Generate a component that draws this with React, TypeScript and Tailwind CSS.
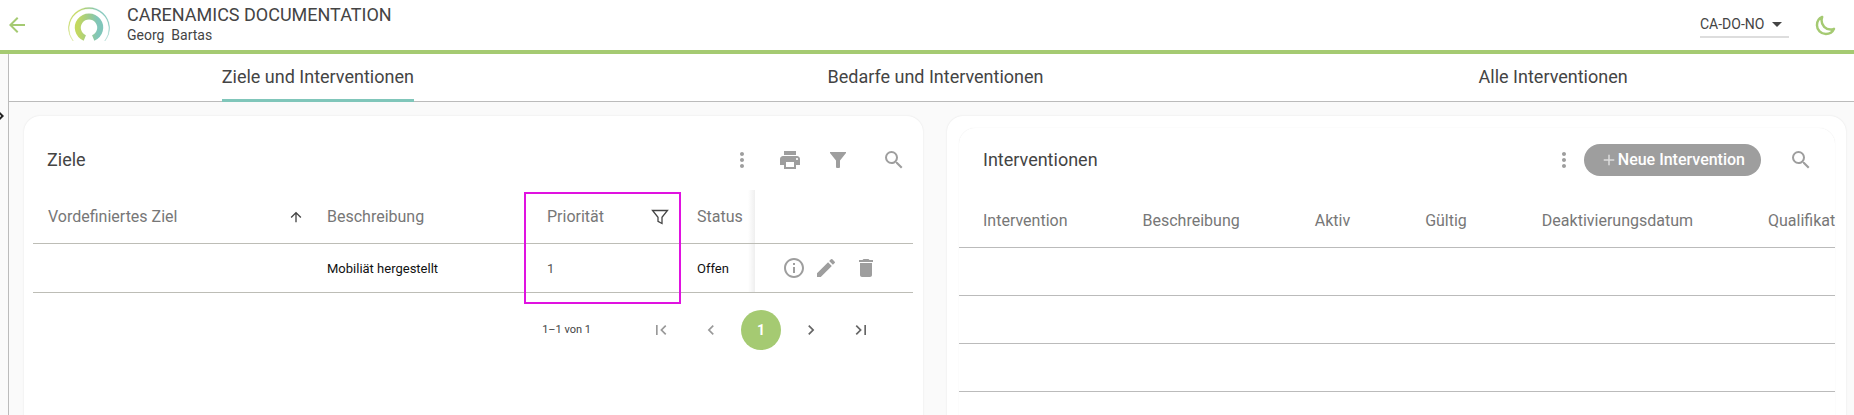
import type { ReactNode } from "react";
import {
  MdAdd,
  MdArrowBack,
  MdArrowDropDown,
  MdArrowUpward,
  MdChevronLeft,
  MdChevronRight,
  MdDelete,
  MdEdit,
  MdFirstPage,
  MdInfoOutline,
  MdLastPage,
  MdMoreVert,
  MdPrint,
  MdSearch,
} from "react-icons/md";

const TABS = ["Ziele und Interventionen", "Bedarfe und Interventionen", "Alle Interventionen"];

const INTERVENTION_COLUMNS = [
  "Intervention",
  "Beschreibung",
  "Aktiv",
  "Gültig",
  "Deaktivierungsdatum",
  "Qualifikation",
];

const GOALS = [{ goal: "", description: "Mobiliät hergestellt", priority: 1, status: "Offen" }];

const Logo = () => (
  <svg width="44" height="38" viewBox="0 0 44 38" fill="none" aria-hidden="true">
    <defs>
      <linearGradient id="ring" x1="0" x2="44" y1="0" y2="0" gradientUnits="userSpaceOnUse">
        <stop offset="0.25" stopColor="#c3d860" />
        <stop offset="0.5" stopColor="#9dcb8c" />
        <stop offset="0.7" stopColor="#80c6ba" />
      </linearGradient>
    </defs>
    <path
      d="M6.2 35A20.5 20.5 0 1 1 37.8 35A20 20 0 1 0 6.2 35Z"
      fill="url(#ring)"
      stroke="url(#ring)"
      strokeWidth="0.3"
    />
    <path d="M17.8 32A11.2 11.2 0 1 1 26.2 32" stroke="url(#ring)" strokeWidth="6" />
  </svg>
);

const Moon = () => (
  <svg width="21" height="21" viewBox="0 0 512 512" fill="none" stroke="currentColor" strokeWidth="60" strokeLinejoin="round" aria-hidden="true">
    <path d="M160 136c0-30.62 4.51-61.61 16-88C99.57 81.27 48 159.32 48 248c0 119.29 96.71 216 216 216 88.68 0 166.73-51.57 200-128-26.39 11.49-57.38 16-88 16-119.29 0-216-96.71-216-216z" />
  </svg>
);

const FunnelFilled = () => (
  <svg width="24" height="24" viewBox="0 0 24 24" fill="currentColor" aria-hidden="true">
    <path d="M4 4h16v1l-6 7.6V19.5l-1 .5h-2l-1-.5v-6.9L4 5Z" />
  </svg>
);

const FunnelOutline = () => (
  <svg width="18" height="16" viewBox="0 0 18 16" fill="none" stroke="#444" strokeWidth="1.3" aria-hidden="true">
    <path d="M1.5 1.5h15L11 8.3v6.2l-4-2.2v-4Z" />
  </svg>
);

const IconButton = ({ label, children, size = "size-12" }: { label: string; children: ReactNode; size?: string }) => (
  <button type="button" aria-label={label} className={`${size} flex shrink-0 items-center justify-center`}>
    {children}
  </button>
);

const Header = () => (
  <header className="flex h-[54px] shrink-0 items-center border-b-4 border-[#a5ca72] bg-white pl-[5px] pr-[17px]">
    <a href="#" aria-label="Zurück" className="text-[#a5ca72]">
      <MdArrowBack size={24} />
    </a>
    <div className="ml-[38px]">
      <Logo />
    </div>
    <div className="ml-4 pb-0.5 text-[#444]">
      <h1 className="text-[18px] leading-[22px]">CARENAMICS DOCUMENTATION</h1>
      <p className="whitespace-pre text-sm leading-[18px]">Georg  Bartas</p>
    </div>
    <div className="relative ml-auto mr-6 flex items-center border-b-2 border-[#ddd]">
      <select
        aria-label="Station"
        defaultValue="CA-DO-NO"
        className="w-[89px] appearance-none bg-transparent text-sm leading-6 text-[#444] outline-none"
      >
        <option>CA-DO-NO</option>
      </select>
      <MdArrowDropDown size={24} className="pointer-events-none absolute right-0 text-[#444]" />
    </div>
    <button type="button" aria-label="Dunkelmodus" className="flex size-6 items-center justify-center text-[#a5ca72]">
      <Moon />
    </button>
  </header>
);

const TabBar = () => (
  <nav className="h-12 shrink-0 border-b border-[#bbb] bg-white">
    <div className="-mr-2 grid h-full grid-cols-3">
      {TABS.map((tab, i) => (
        <a key={tab} href="#" className="flex justify-center text-[18px] text-[#444]">
          <span
            className={`flex h-12 items-center rounded-t-xs border-b-3 ${
              i === 0 ? "border-[#80c6ba]" : "border-transparent"
            }`}
          >
            {tab}
          </span>
        </a>
      ))}
    </div>
  </nav>
);

const GoalTable = () => (
  <table className="w-full table-fixed border-collapse text-left">
    <colgroup>
      <col className="w-[279px]" />
      <col />
      <col className="w-[150px]" />
      <col className="w-[74px]" />
      <col className="w-[158px]" />
    </colgroup>
    <thead className="text-base text-[#777]">
      <tr className="h-[53px] border-b border-[#bdbdb6]">
        <th className="pl-[15px] pr-4 pt-0.5 font-normal">
          <div className="flex items-center justify-between">
            Vordefiniertes Ziel
            <MdArrowUpward size={16} className="-mr-2 text-[#444]" />
          </div>
        </th>
        <th className="px-[15px] pt-0.5 font-normal">Beschreibung</th>
        <th className="relative px-4 pt-0.5 font-normal">
          <div className="flex items-center justify-between">
            Priorität
            <button type="button" aria-label="Priorität filtern" className="-mr-1">
              <FunnelOutline />
            </button>
          </div>
          <div className="pointer-events-none absolute -left-[7px] right-0 top-0.5 h-28 border-2 border-[#e012e0]" />
        </th>
        <th className="bg-[linear-gradient(to_left,#efefef,transparent_7px)] px-4 pt-0.5 font-normal">Status</th>
        <th aria-label="Aktionen" />
      </tr>
    </thead>
    <tbody className="text-[13px] text-[#111]">
      {GOALS.map((g) => (
        <tr key={g.description} className="h-[49px] border-b border-[#bdbdb6]">
          <td className="px-[15px] pt-0.5">{g.goal}</td>
          <td className="px-[15px] pt-0.5">{g.description}</td>
          <td className="px-4 pt-0.5 text-[#555]">{g.priority}</td>
          <td className="bg-[linear-gradient(to_left,#efefef,transparent_7px)] px-4 pt-0.5">{g.status}</td>
          <td>
            <div className="flex items-center pl-[23px] text-[#9e9e9e]">
              <IconButton label="Info" size="size-8">
                <MdInfoOutline size={24} />
              </IconButton>
              <IconButton label="Bearbeiten" size="size-8">
                <MdEdit size={24} />
              </IconButton>
              <span className="w-2" />
              <IconButton label="Löschen" size="size-8">
                <MdDelete size={24} />
              </IconButton>
            </div>
          </td>
        </tr>
      ))}
    </tbody>
  </table>
);

const Pagination = () => (
  <div className="mt-[17px] flex items-center justify-end gap-2.5 pr-8">
    <span className="mr-10 pt-0.5 text-[11px] text-[#444]">1–1 von 1</span>
    <IconButton label="Erste Seite" size="size-10">
      <MdFirstPage size={20} className="text-[#999]" />
    </IconButton>
    <IconButton label="Vorherige Seite" size="size-10">
      <MdChevronLeft size={20} className="text-[#999]" />
    </IconButton>
    <button type="button" className="size-10 rounded-full bg-[#a5ca72] text-sm font-bold text-white">
      1
    </button>
    <IconButton label="Nächste Seite" size="size-10">
      <MdChevronRight size={20} className="text-[#666]" />
    </IconButton>
    <IconButton label="Letzte Seite" size="size-10">
      <MdLastPage size={20} className="text-[#666]" />
    </IconButton>
  </div>
);

const GoalsCard = () => (
  <section className="min-w-0 rounded-t-2xl bg-white pl-[9px] pr-2.5 pt-5 shadow-[0_0_2px_rgba(0,0,0,0.1)]">
    <div className="-mr-[5px] mb-1.5 flex h-12 items-center pl-3.5 text-[#9e9e9e]">
      <h2 className="mr-auto pb-0.5 text-[18px] text-[#444]">Ziele</h2>
      <IconButton label="Mehr">
        <MdMoreVert size={24} />
      </IconButton>
      <IconButton label="Drucken">
        <MdPrint size={24} />
      </IconButton>
      <IconButton label="Filtern">
        <FunnelFilled />
      </IconButton>
      <span className="w-2" />
      <IconButton label="Suchen">
        <MdSearch size={24} />
      </IconButton>
    </div>
    <GoalTable />
    <Pagination />
  </section>
);

const InterventionsCard = () => (
  <section className="flex min-w-0 rounded-t-2xl bg-white pl-3 pr-[11px] pt-3 shadow-[0_0_2px_rgba(0,0,0,0.1)]">
    <div className="w-full overflow-hidden rounded-t-2xl pt-2 shadow-[0_0_1px_rgba(0,0,0,0.12)]">
      <div className="flex h-12 items-center pl-6 pr-2.5 text-[#9e9e9e]">
        <h2 className="mr-auto pb-0.5 text-[18px] text-[#444]">Interventionen</h2>
        <IconButton label="Mehr" size="h-12 w-10">
          <MdMoreVert size={24} />
        </IconButton>
        <button
          type="button"
          className="mr-4 flex h-8 items-center rounded-full bg-[#9e9e9e] px-4 text-base font-medium text-white"
        >
          <MdAdd size={18} className="text-[#ddd]" />
          Neue Intervention
        </button>
        <IconButton label="Suchen">
          <MdSearch size={24} />
        </IconButton>
      </div>
      <table className="min-w-full border-collapse text-left">
        <thead className="text-base text-[#777]">
          <tr className="h-[63px] border-b border-[#bbb]">
            {INTERVENTION_COLUMNS.map((name) => (
              <th key={name} className="whitespace-nowrap pl-6 pr-[51px] pt-3 font-normal">
                {name}
              </th>
            ))}
          </tr>
        </thead>
        <tbody>
          {[1, 2, 3, 4].map((row) => (
            <tr key={row} className="h-12 border-b border-[#bbb]">
              <td colSpan={INTERVENTION_COLUMNS.length} />
            </tr>
          ))}
        </tbody>
      </table>
    </div>
  </section>
);

export default function App() {
  return (
    <div className="flex h-screen flex-col overflow-hidden bg-[#fafafa] font-['Roboto',sans-serif]">
      <Header />
      <div className="flex min-h-0 flex-1">
        <aside className="flex w-[9px] shrink-0 overflow-hidden border-r border-[#bbb] pt-[50px]">
          <button type="button" aria-label="Menü öffnen" className="-ml-3 h-6 shrink-0 text-[#222]">
            <MdChevronRight size={24} />
          </button>
        </aside>
        <div className="flex min-w-0 flex-1 flex-col overflow-hidden">
          <TabBar />
          <main className="grid min-h-0 flex-1 grid-cols-2 gap-6 pl-[15px] pr-2 pt-3.5">
            <GoalsCard />
            <InterventionsCard />
          </main>
        </div>
      </div>
    </div>
  );
}
